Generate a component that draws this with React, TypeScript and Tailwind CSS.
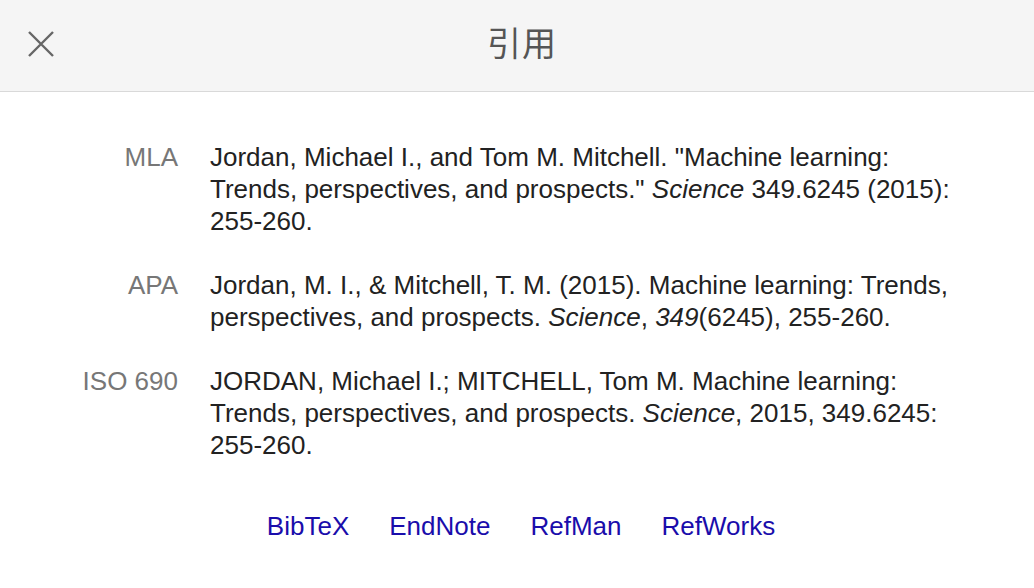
import React from 'react';

const citations = [
  {
    label: 'MLA',
    text: (
      <>
        Jordan, Michael I., and Tom M. Mitchell. "Machine learning: Trends, perspectives, and prospects."{' '}
        <i>Science</i> 349.6245 (2015): 255-260.
      </>
    ),
  },
  {
    label: 'APA',
    text: (
      <>
        Jordan, M. I., &amp; Mitchell, T. M. (2015). Machine learning: Trends, perspectives, and prospects.{' '}
        <i>Science</i>, <i>349</i>(6245), 255-260.
      </>
    ),
  },
  {
    label: 'ISO 690',
    text: (
      <>
        JORDAN, Michael I.; MITCHELL, Tom M. Machine learning: Trends, perspectives, and prospects.{' '}
        <i>Science</i>, 2015, 349.6245: 255-260.
      </>
    ),
  },
];

const links = ['BibTeX', 'EndNote', 'RefMan', 'RefWorks'];

export default function App() {
  return (
    <div
      className="w-[1034px] h-[588px] bg-white overflow-hidden"
      style={{ fontFamily: '"Liberation Sans", Arial, "Noto Sans CJK SC", sans-serif' }}
    >
      {/* Header */}
      <div className="relative h-[92px] bg-[#f5f5f5] border-b border-[#d9d9d9] flex items-center justify-center">
        <button className="absolute left-[27px] top-[30px] w-[28px] h-[28px] text-[#666]">
          <svg viewBox="0 0 28 28" width="28" height="28" fill="none" stroke="currentColor" strokeWidth="2.4">
            <path d="M2 2 L26 26 M26 2 L2 26" />
          </svg>
        </button>
        <h1 className="text-[34px] text-[#555] tracking-[1px] pl-[10px] pb-[2px]">引用</h1>
      </div>

      {/* Citations */}
      <div className="pt-[49px]">
        {citations.map((c) => (
          <div key={c.label} className="grid grid-cols-[178px_760px] gap-x-[32px] mb-[32px] text-[26px] leading-[32px]">
            <div className="text-right text-[#777]">{c.label}</div>
            <div className="text-[#222]">{c.text}</div>
          </div>
        ))}
      </div>

      {/* Export links */}
      <div className="flex justify-center gap-[40px] pt-[17px] pl-[8px] text-[26px] leading-[32px]">
        {links.map((l) => (
          <a key={l} href="#" className="text-[#1a0dab]">
            {l}
          </a>
        ))}
      </div>
    </div>
  );
}
